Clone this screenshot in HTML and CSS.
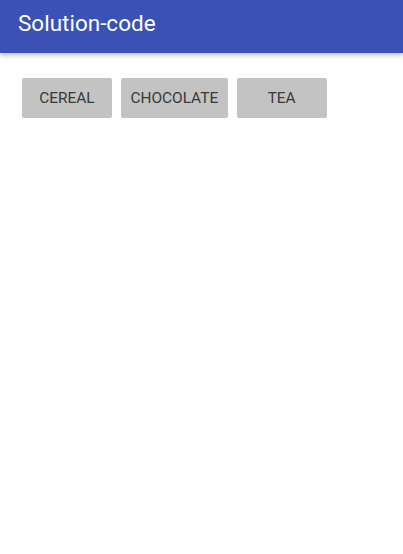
FILE: index.html
```html
<!DOCTYPE html>
<html>
<head>
<meta charset="utf-8">
<link rel="stylesheet" href="styles.css">
</head>
<body>
<header class="appbar"><span class="title">Solution-code</span></header>
<main class="content">
  <button class="btn">CEREAL</button>
  <button class="btn">CHOCOLATE</button>
  <button class="btn">TEA</button>
</main>
</body>
</html>
```
FILE: styles.css
```css
html, body {
  margin: 0;
  padding: 0;
  background: #ffffff;
  font-family: Roboto, "Liberation Sans", sans-serif;
}
.appbar {
  height: 53px;
  background: #3a51b5;
  display: flex;
  align-items: center;
  padding-left: 18px;
  box-shadow: 0 2px 5px rgba(0, 0, 0, 0.28);
}
.title {
  color: #ffffff;
  font-size: 22.5px;
  font-weight: 400;
  margin-top: -7px;
}
.content {
  display: flex;
  gap: 9px;
  padding: 25px 0 0 22px;
}
.btn {
  min-width: 90px;
  height: 40px;
  padding: 0 9.5px;
  border: none;
  border-radius: 2px;
  background: #c3c3c3;
  color: #383838;
  font-family: Roboto, "Liberation Sans", sans-serif;
  font-weight: 400;
  font-size: 15.4px;
  letter-spacing: 0;
}
```
